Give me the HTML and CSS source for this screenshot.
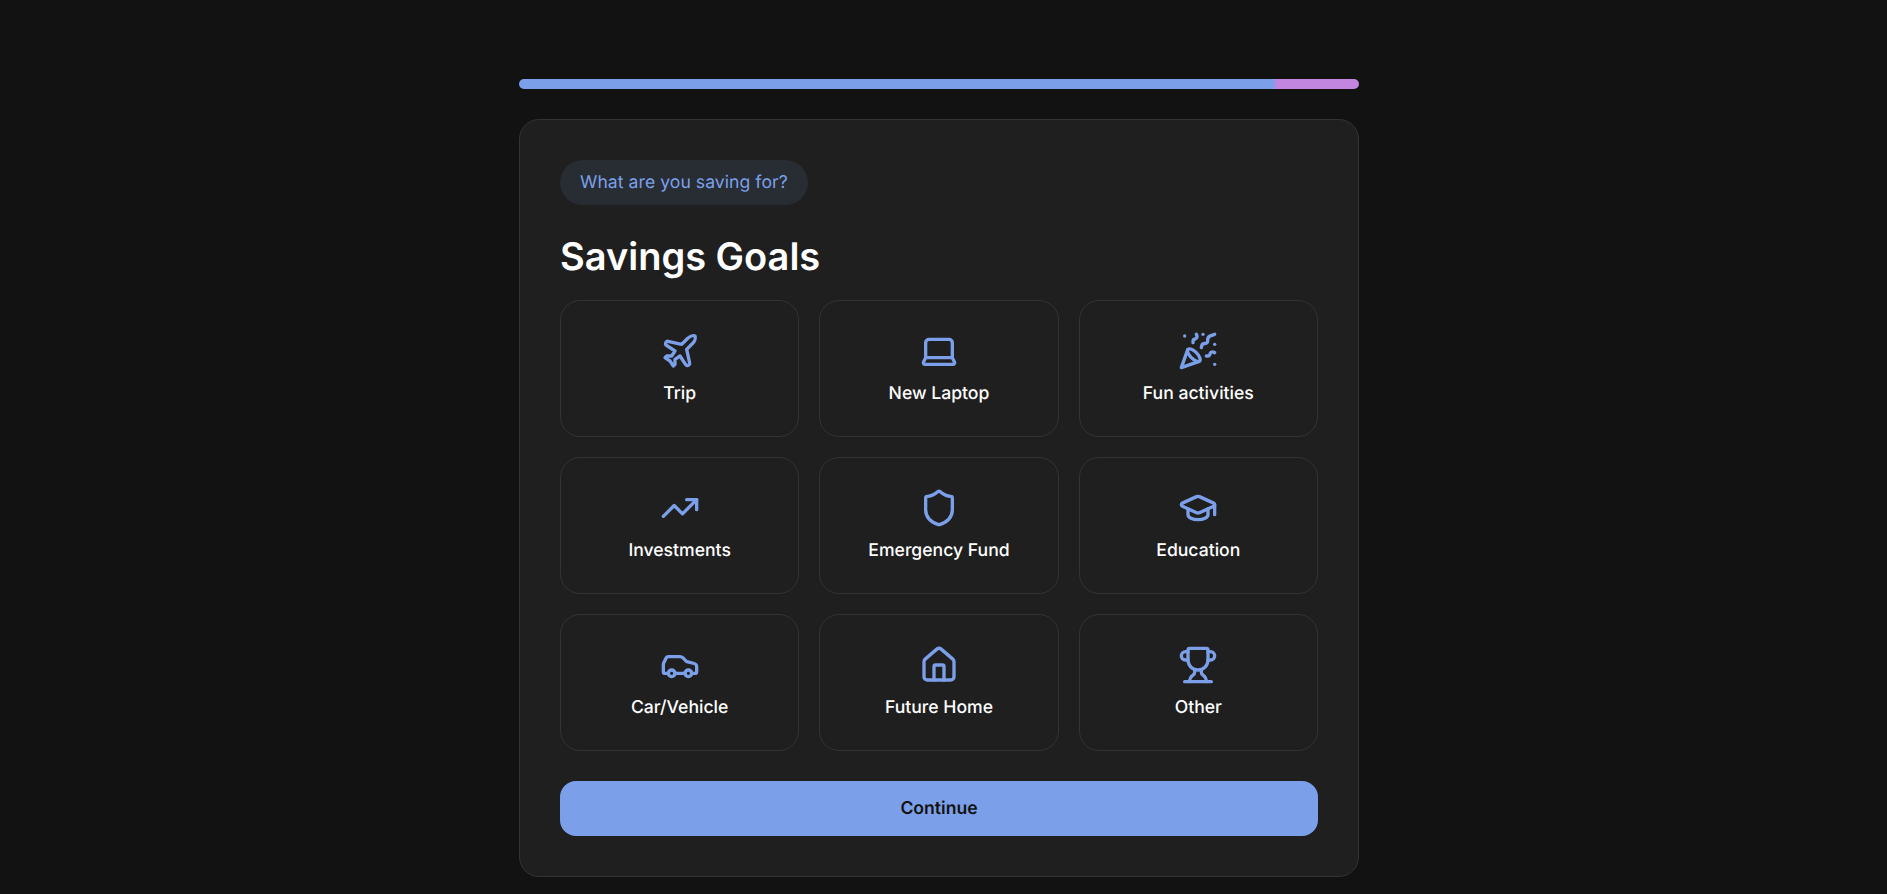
FILE: index.html
```html
<!DOCTYPE html>
<html lang="en">
<head>
<meta charset="utf-8">
<title>Savings Goals</title>
<link rel="stylesheet" href="styles.css">
</head>
<body>
<main class="page">
  <div class="progress"><div class="progress-done"></div><div class="progress-next"></div></div>
  <section class="panel">
    <div class="pill">What are you saving for?</div>
    <h1 class="title">Savings Goals</h1>
    <div class="goals">
      <button class="goal"><svg class="icon" viewBox="0 0 24 24"><path d="M17.8 19.2 16 11l3.5-3.5C21 6 21.5 4 21 3c-1-.5-3 0-4.5 1.5L13 8 4.8 6.2c-.5-.1-.9.1-1.1.5l-.3.5c-.2.5-.1 1 .3 1.3L9 12l-2 3H4l-1 1 3 2 2 3 1-1v-3l3-2 3.5 5.3c.3.4.8.5 1.3.3l.5-.2c.4-.3.6-.7.5-1.2z"/></svg><span>Trip</span></button>
      <button class="goal"><svg class="icon" viewBox="0 0 24 24"><path d="M20 16V7a2 2 0 0 0-2-2H6a2 2 0 0 0-2 2v9m16 0H4m16 0 1.28 2.55a1 1 0 0 1-.9 1.45H3.62a1 1 0 0 1-.9-1.45L4 16"/></svg><span>New Laptop</span></button>
      <button class="goal"><svg class="icon" viewBox="0 0 24 24"><path d="M5.8 11.3 2 22l10.7-3.79"/><path d="M4 3h.01"/><path d="M22 8h.01"/><path d="M15 2h.01"/><path d="M22 20h.01"/><path d="m22 2-2.24.75a2.9 2.9 0 0 0-1.96 3.12c.1.86-.57 1.63-1.45 1.63h-.38c-.86 0-1.6.6-1.76 1.44L14 10"/><path d="m22 13-.82-.33c-.86-.34-1.82.2-1.98 1.11c-.11.7-.72 1.22-1.43 1.22H17"/><path d="m11 2 .33.82c.34.86-.2 1.82-1.11 1.98C9.52 4.9 9 5.52 9 6.23V7"/><path d="M11 13c1.93 1.93 2.83 4.17 2 5-.83.83-3.07-.07-5-2-1.93-1.93-2.83-4.17-2-5 .83-.83 3.07.07 5 2Z"/></svg><span>Fun activities</span></button>
      <button class="goal"><svg class="icon" viewBox="0 0 24 24"><path d="M22 7 13.5 15.5 8.5 10.5 2 17"/><path d="M16 7h6v6"/></svg><span>Investments</span></button>
      <button class="goal"><svg class="icon" viewBox="0 0 24 24"><path d="M20 13c0 5-3.5 7.5-7.66 8.95a1 1 0 0 1-.67-.01C7.5 20.5 4 18 4 13V6a1 1 0 0 1 1-1c2 0 4.5-1.2 6.24-2.72a1.17 1.17 0 0 1 1.52 0C14.51 3.81 17 5 19 5a1 1 0 0 1 1 1z"/></svg><span>Emergency Fund</span></button>
      <button class="goal"><svg class="icon" viewBox="0 0 24 24"><path d="M21.42 10.922a1 1 0 0 0-.019-1.838L12.83 5.18a2 2 0 0 0-1.66 0L2.6 9.08a1 1 0 0 0 0 1.832l8.57 3.908a2 2 0 0 0 1.66 0z"/><path d="M22 10v6"/><path d="M6 12.5V16a6 3 0 0 0 12 0v-3.5"/></svg><span>Education</span></button>
      <button class="goal"><svg class="icon" viewBox="0 0 24 24"><path d="M19 17h2c.6 0 1-.4 1-1v-3c0-.9-.7-1.7-1.5-1.9C18.7 10.6 16 10 16 10s-1.3-1.4-2.2-2.3c-.5-.4-1.1-.7-1.8-.7H5c-.6 0-1.1.4-1.4.9l-1.4 2.9A3.7 3.7 0 0 0 2 12v4c0 .6.4 1 1 1h2"/><circle cx="7" cy="17" r="2"/><path d="M9 17h6"/><circle cx="17" cy="17" r="2"/></svg><span>Car/Vehicle</span></button>
      <button class="goal"><svg class="icon" viewBox="0 0 24 24"><path d="M15 21v-8a1 1 0 0 0-1-1h-4a1 1 0 0 0-1 1v8"/><path d="M3 10a2 2 0 0 1 .709-1.528l7-5.999a2 2 0 0 1 2.582 0l7 5.999A2 2 0 0 1 21 10v9a2 2 0 0 1-2 2H5a2 2 0 0 1-2-2z"/></svg><span>Future Home</span></button>
      <button class="goal"><svg class="icon" viewBox="0 0 24 24"><path d="M10 14.66v1.626a2 2 0 0 1-.976 1.696A5 5 0 0 0 7 21.978"/><path d="M14 14.66v1.626a2 2 0 0 0 .976 1.696A5 5 0 0 1 17 21.978"/><path d="M18 9h1.5a2.5 2.5 0 0 0 0-5H18"/><path d="M18 9a6 6 0 0 1-12 0V3a1 1 0 0 1 1-1h10a1 1 0 0 1 1 1z"/><path d="M6 9H4.5a2.5 2.5 0 0 1 0-5H6"/><path d="M4 22h16"/></svg><span>Other</span></button>
    </div>
    <button class="continue">Continue</button>
  </section>
</main>
</body>
</html>
```

FILE: styles.css
```css
* { box-sizing: border-box; }
html, body { margin: 0; height: 100%; }
body {
  background: #121212;
  color: #fff;
  font-family: Inter, "Liberation Sans", sans-serif;
  text-rendering: geometricPrecision;
  overflow: hidden;
  padding-right: 9px;
}
.page {
  width: 840px;
  margin: 0 auto;
  padding-top: 79px;
  display: flex;
  flex-direction: column;
  gap: 30px;
}
.progress {
  display: flex;
  height: 10px;
  border-radius: 5px;
  overflow: hidden;
}
.progress-done { flex: 0 0 90%; background: #7ba0e9; }
.progress-next { flex: 1; background: #c285e0; }
.panel {
  background: #1f1f1f;
  border: 1px solid #333;
  border-radius: 20px;
  padding: 40px;
  display: flex;
  flex-direction: column;
  align-items: flex-start;
}
.pill {
  background: #282c33;
  color: #7ba0e9;
  font-size: 17.6px;
  letter-spacing: 0.05px;
  line-height: 24px;
  padding: 11px 20px 10px;
  border-radius: 23px;
}
.title {
  margin: 29px 0 20px;
  font-size: 38px;
  font-weight: 600;
  line-height: 46px;
  color: #fff;
}
.goals {
  align-self: stretch;
  display: grid;
  grid-template-columns: repeat(3, 1fr);
  grid-auto-rows: 137px;
  gap: 20px;
}
.goal {
  background: transparent;
  border: 1px solid #333;
  border-radius: 20px;
  color: #fff;
  font: 500 17.6px/24px Inter, "Liberation Sans", sans-serif;
  text-rendering: geometricPrecision;
  padding: 0 0 1px;
  display: flex;
  flex-direction: column;
  align-items: center;
  justify-content: center;
  gap: 11px;
}
.icon {
  width: 40px;
  height: 40px;
  fill: none;
  stroke: #7ba0e9;
  stroke-width: 2;
  stroke-linecap: round;
  stroke-linejoin: round;
}
.continue {
  align-self: stretch;
  margin-top: 30px;
  height: 55px;
  padding: 0;
  background: #7ba0e9;
  border: 0;
  border-radius: 16px;
  color: #121212;
  font: 600 17.6px/24px Inter, "Liberation Sans", sans-serif;
  text-rendering: geometricPrecision;
}
```
